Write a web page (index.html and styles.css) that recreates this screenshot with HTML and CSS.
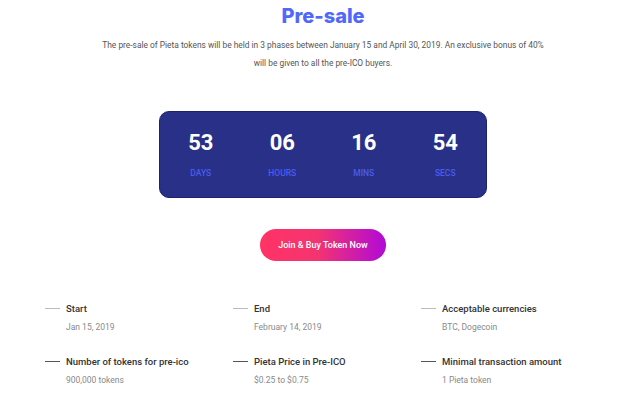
FILE: index.html
```html
<!DOCTYPE html>
<html>
<head>
<meta charset="utf-8">
<link rel="stylesheet" href="styles.css">
</head>
<body>
<main class="page">
  <h1 class="title">Pre-sale</h1>
  <p class="lead">The pre-sale of Pieta tokens will be held in 3 phases between January 15 and April 30, 2019. An exclusive bonus of 40% will be given to all the pre-ICO buyers.</p>
  <div class="countdown">
    <div class="unit"><span class="num">53</span><span class="lbl">DAYS</span></div>
    <div class="unit"><span class="num">06</span><span class="lbl">HOURS</span></div>
    <div class="unit"><span class="num">16</span><span class="lbl">MINS</span></div>
    <div class="unit"><span class="num">54</span><span class="lbl">SECS</span></div>
  </div>
  <div class="cta"><a class="btn">Join &amp; Buy Token Now</a></div>
  <div class="info">
    <div class="item light"><div class="head"><span class="dash"></span><span class="name">Start</span></div><div class="val">Jan 15, 2019</div></div>
    <div class="item light"><div class="head"><span class="dash"></span><span class="name">End</span></div><div class="val">February 14, 2019</div></div>
    <div class="item light"><div class="head"><span class="dash"></span><span class="name">Acceptable currencies</span></div><div class="val">BTC, Dogecoin</div></div>
    <div class="item"><div class="head"><span class="dash"></span><span class="name">Number of tokens for pre-ico</span></div><div class="val">900,000 tokens</div></div>
    <div class="item"><div class="head"><span class="dash"></span><span class="name">Pieta Price in Pre-ICO</span></div><div class="val">$0.25 to $0.75</div></div>
    <div class="item"><div class="head"><span class="dash"></span><span class="name">Minimal transaction amount</span></div><div class="val">1 Pieta token</div></div>
  </div>
</main>
</body>
</html>
```
FILE: styles.css
```css
html, body { margin: 0; padding: 0; background: #fff; }
body { font-family: Roboto, "Open Sans", sans-serif; }
.page { width: 640px; padding: 0 0 0 6px; box-sizing: border-box; display: flex; flex-direction: column; align-items: center; }
.title { margin: 1px 0 0; font-family: Inter, "Open Sans", sans-serif; font-weight: 800; font-size: 20px; line-height: 30px; color: #5069fb; letter-spacing: 0; }
.lead { margin: 5px 0 0; width: 450px; text-align: center; font-size: 8.4px; line-height: 18px; color: #555; }
.countdown { margin-top: 39px; width: 328px; height: 87px; box-sizing: border-box; background: #283087; border: 1px solid #1c226c; border-radius: 10px; display: grid; grid-template-columns: repeat(4, 1fr); padding-top: 18px; }
.unit { display: flex; flex-direction: column; align-items: center; }
.num { font-weight: 700; font-size: 22px; line-height: 26px; color: #fff; }
.lbl { margin-top: 12px; font-size: 8.5px; line-height: 10px; font-weight: 500; color: #4a5cf0; }
.cta { margin-top: 31px; }
.btn { display: flex; align-items: center; justify-content: center; width: 126px; height: 32px; border-radius: 16px; background: linear-gradient(90deg, #ff3366 0%, #f43470 45%, #b10ad8 100%); color: #fff; font-size: 9px; font-weight: 500; }
.info { align-self: flex-start; margin: 40px 0 0 39px; display: grid; grid-template-columns: repeat(3, 188px); row-gap: 20px; }
.item { display: flex; flex-direction: column; }
.head { display: flex; align-items: center; height: 14px; }
.dash { width: 15px; height: 1px; background: #555; margin-right: 6px; }
.light .dash { background: #bbb; }
.name { font-size: 9.5px; font-weight: 500; color: #333; }
.val { margin: 5px 0 0 21px; font-size: 8.5px; line-height: 14px; color: #8a8a8a; }
```
